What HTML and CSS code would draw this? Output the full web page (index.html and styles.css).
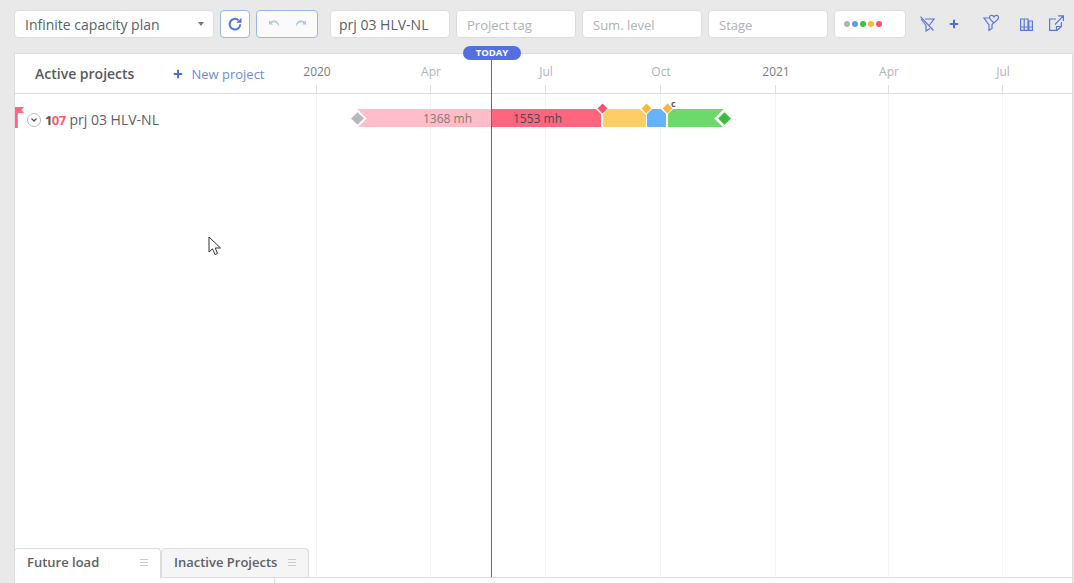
FILE: index.html
```html
<!DOCTYPE html>
<html lang="en">
<head>
<meta charset="utf-8">
<title>Infinite capacity plan</title>
<link rel="stylesheet" href="styles.css">
</head>
<body>
<header class="toolbar">
  <div class="field plan"><span>Infinite capacity plan</span><i class="caret"></i></div>
  <button class="tool refresh" aria-label="Refresh">
    <svg width="16" height="16" viewBox="0 0 16 16"><path d="M13.200 8.200A5.300 5.300 0 1 1 11.400 4.200" fill="none" stroke="#4f74e3" stroke-width="2"/><path d="M9.300 6.800h5.200V1.800z" fill="#4f74e3"/></svg>
  </button>
  <div class="tool history">
    <svg width="13" height="10" viewBox="0 0 14 10"><path d="M1 1v4.500h4.500L3.700 3.800C6.500 2.200 9.600 3 11.600 7.600 13 3 7 -1 2.700 2.600z" fill="#b4c4ee"/></svg>
    <svg width="13" height="10" viewBox="0 0 14 10"><path d="M13 1v4.500H8.500l1.800-1.700C7.500 2.200 4.400 3 2.400 7.600 1 3 7 -1 11.300 2.600z" fill="#b4c4ee"/></svg>
  </div>
  <div class="field value">prj 03 HLV-NL</div>
  <div class="field search">Project tag</div>
  <div class="field search">Sum. level</div>
  <div class="field search">Stage</div>
  <div class="field dots"><i class="dot grey"></i><i class="dot blue"></i><i class="dot green"></i><i class="dot amber"></i><i class="dot rose"></i></div>
  <div class="actions">
    <svg class="icon-filter" width="15" height="16" viewBox="0 0 15 16"><path d="M.5 .7L13.500 14.500M5 3H14L9.500 9M1 3L6 9.500V15L10 12.500" fill="none" stroke="#5a75e0" stroke-width="1.200"/></svg>
    <svg class="icon-plus" width="10" height="10" viewBox="0 0 10 10"><path d="M5 .8v8.400M.8 5h8.400" stroke="#4f6fe0" stroke-width="2"/></svg>
    <svg class="icon-fav" width="16" height="18" viewBox="0 0 16 18"><path d="M6.500 4H1L6 11V16.500L9 14.500V10.500L10.500 9M11 8.800C8 6.500 6.500 5 6.500 3.200 6.500 1 10 .7 11 3 12 .7 15.500 1 15.500 3.200 15.500 5 14 6.500 11 8.800Z" fill="none" stroke="#5a75e0" stroke-width="1.200"/></svg>
    <svg class="icon-books" width="13" height="13" viewBox="0 0 13 13"><path d="M.6 1h3.600v11.400H.6zM4.200 1h3.800v11.400H4.200zM8.800 3h3.600v9.400H8.800zM.6 9h11.800" fill="none" stroke="#5a75e0" stroke-width="1.200"/></svg>
    <svg class="icon-export" width="15" height="16" viewBox="0 0 15 16"><path d="M7 4H.6V15.400H8L12.400 11.500V7M7.500 15.400V11.500H12.400M6 9.500L14 1.200M9 .8H14.400V6" fill="none" stroke="#5a75e0" stroke-width="1.200"/></svg>
  </div>
</header>

<main class="panel">
  <div class="panel-head">
    <h1 class="panel-title">Active projects</h1>
    <a class="new-project"><svg width="10" height="10" viewBox="0 0 10 10"><path d="M5 .8v8.400M.8 5h8.400" stroke="#4f6fe0" stroke-width="2"/></svg><span>New project</span></a>
  </div>
  <div class="row">
    <svg class="flag" width="10" height="21" viewBox="0 0 10 21"><path d="M0 0h9L6.500 3 9 6H2.800V21H0z" fill="#fc6681"/></svg>
    <span class="toggle"><svg width="8" height="6" viewBox="0 0 8 6"><path d="M1.500 1.500L4 4 6.500 1.500" fill="none" stroke="#555" stroke-width="1.300"/></svg></span>
    <span class="row-id"><b class="id-dark">1</b><b class="id-red">07</b></span>
    <span class="row-name">prj 03 HLV-NL</span>
  </div>

  <div class="tabs">
    <div class="tab active"><span>Future load</span><i class="grip"></i></div>
    <div class="tab"><span>Inactive Projects</span><i class="grip"></i></div>
    <div class="tabs-rest"></div>
  </div>

  <div class="chart">
    <span class="tick t0"></span><span class="tick t1"></span><span class="tick t2"></span><span class="tick t3"></span><span class="tick t4"></span><span class="tick t5"></span><span class="tick t6"></span>
    <span class="grid t0"></span><span class="grid t1"></span><span class="grid t2"></span><span class="grid t3"></span><span class="grid t4"></span><span class="grid t5"></span><span class="grid t6"></span>
    <span class="label year l0">2020</span><span class="label l1">Apr</span><span class="label l2">Jul</span><span class="label l3">Oct</span><span class="label year l4">2021</span><span class="label l5">Apr</span><span class="label l6">Jul</span>

    <div class="seg seg-pink">1368 mh</div>
    <div class="seg seg-red">1553 mh</div>
    <div class="seg seg-yellow"></div>
    <div class="seg seg-sky"></div>
    <div class="seg seg-lime"></div>
    <i class="notch n-start"></i>
    <i class="notch n-end"></i>
    <i class="notch small n-a"></i>
    <i class="notch small n-b"></i>
    <i class="notch small n-c"></i>
    <i class="gem g-start"></i>
    <i class="gem tiny g-red"></i>
    <i class="gem tiny g-amber1"></i>
    <i class="gem tiny g-amber2"></i>
    <i class="gem g-end"></i>
    <span class="c-mark">c</span>

    <div class="today-line"></div>
    <div class="today">TODAY</div>
    <span class="stub"></span>
  </div>
  <svg class="cursor" width="14" height="21" viewBox="0 0 14 21"><path d="M1 1V16L4.500 12.800 7 18.500 9.500 17.400 7.200 12H12.500Z" fill="#fff" stroke="#333" stroke-width="1"/></svg>
</main>
</body>
</html>
```
FILE: styles.css
```css
* { box-sizing: border-box; }
html, body { height: 583px; overflow: hidden; }
body {
  margin: 0;
  padding: 10px 1px 0 14px;
  display: flex;
  flex-direction: column;
  background: #e9e9e9;
  font-family: "Open Sans", "Noto Sans", sans-serif;
  color: #5c6068;
}

.toolbar { display: flex; align-items: stretch; height: 28px; gap: 6px; }
.field {
  display: flex;
  align-items: center;
  flex: none;
  background: #fff;
  border: 1px solid #dcdcdc;
  border-radius: 4px;
  font-size: 14px;
}
.plan { width: 200px; padding: 0 10px; justify-content: space-between; color: #5a5f66; }
.caret { border: 3.500px solid transparent; border-top: 4px solid #777; border-bottom: 0; margin-right: -1px; }
.tool {
  display: flex; align-items: center; justify-content: center; flex: none;
  background: #fff; border: 1px solid #9db5ef; border-radius: 4px; padding: 0;
}
.refresh { width: 30px; }
.history { width: 62px; gap: 13px; background: #fafafa; }
.search { width: 120px; padding: 1px 10px 0; color: #aeb1b6; font-size: 13px; }
.value { width: 120px; padding: 0 8px; margin-left: 6px; color: #5a5f66; }
.dots { width: 72px; padding: 0 0 0 9px; gap: 2px; }
.dot { flex: none; width: 6px; height: 6px; border-radius: 50%; }
.grey { background: #b3b3b3; }
.blue { background: #5b9bf5; }
.green { background: #3fc13f; }
.amber { background: #fbb63b; }
.rose { background: #fb5070; }
.actions { flex: 1; display: flex; align-items: center; padding-left: 8px; }
.actions svg { flex: none; }
.icon-filter { margin-right: 14px; }
.icon-plus { margin-right: 24px; }
.icon-fav { margin-right: 21px; margin-top: -2px; }
.icon-books { margin-right: 16px; }
.icon-export { margin-top: -2px; }

.panel {
  position: relative;
  flex: 1;
  margin-top: 15px;
  background: #fff;
  border: 1px solid #dcdcdc;
  border-bottom: 0;
}
.panel-head {
  display: flex;
  align-items: center;
  height: 40px;
  padding: 0 0 0 20px;
  border-bottom: 1px solid #dedede;
}
.panel-title { margin: 0 39px 0 0; font-size: 14px; font-weight: 600; color: #555a62; }
.new-project { display: flex; align-items: center; gap: 8px; font-size: 13px; color: #7089d8; }
.row { display: flex; align-items: center; height: 51px; position: relative; padding-left: 12px; }
.flag { position: absolute; left: 0; top: 13px; }
.toggle {
  width: 14px; height: 14px; border: 1px solid #bbb; border-radius: 50%;
  display: flex; align-items: center; justify-content: center;
}
.row-id { margin-left: 4px; font-size: 13px; letter-spacing: -.6px; }
.id-dark { color: #555; }
.id-red { color: #fb5a72; }
.row-name { margin-left: 4px; font-size: 14px; color: #5c6068; }

.tabs { position: absolute; left: -1px; right: 0; bottom: 5px; display: flex; align-items: flex-end; z-index: 2; }
.tab {
  display: flex; align-items: center; justify-content: space-between;
  width: 148px; height: 30px; padding: 0 12px 2px;
  background: #f5f5f5; border: 1px solid #dcdcdc; border-radius: 4px 4px 0 0;
  font-size: 13px; font-weight: 600; color: #5c6068;
}
.tab.active { width: 147px; height: 31px; padding-bottom: 3px; background: #fff; border-bottom-color: #fff; margin-bottom: -1px; }
.grip { width: 8px; height: 7px; border-top: 1px solid #ccc; border-bottom: 1px solid #ccc; position: relative; }
.grip::after { content: ""; position: absolute; left: 0; right: 0; top: 2px; border-top: 1px solid #ccc; }
.tabs-rest { flex: 1; border-bottom: 1px solid #dcdcdc; }

.chart { position: absolute; inset: 0; pointer-events: none; }
.tick { position: absolute; top: 31px; height: 9px; width: 1px; background: #dedede; }
.grid { position: absolute; top: 40px; bottom: 6px; width: 1px; background: #f4f4f4; }
.t0 { left: 301px; }
.t1 { left: 415px; }
.t2 { left: 530px; }
.t3 { left: 645px; }
.t4 { left: 760px; }
.t5 { left: 873px; }
.t6 { left: 987px; }
.label { position: absolute; top: 10px; width: 60px; text-align: center; font-size: 12px; line-height: 16px; color: #b0b3b8; }
.label.year { color: #7a7d82; }
.l0 { left: 272px; }
.l1 { left: 386px; }
.l2 { left: 501px; }
.l3 { left: 616px; }
.l4 { left: 731px; }
.l5 { left: 844px; }
.l6 { left: 958px; }

.seg { position: absolute; top: 55px; height: 18px; font-size: 12px; line-height: 19px; text-align: right; }
.seg-pink { left: 342px; width: 134px; background: #ffbdc9; color: #8a7a70; padding-right: 19px; }
.seg-red { left: 476px; width: 110px; background: #fe667f; color: #4a4a55; padding-right: 39px; font-weight: 500; }
.seg-yellow { left: 588px; width: 43px; background: #ffcd65; }
.seg-sky { left: 632px; width: 19px; background: #66b3fb; }
.seg-lime { left: 653px; width: 56px; background: #6dd96b; }
.notch { position: absolute; width: 13px; height: 13px; transform: rotate(45deg); background: #fff; }
.notch.small { width: 10px; height: 10px; }
.n-start { left: 336px; top: 58px; }
.n-end { left: 702px; top: 58px; }
.n-a { left: 582px; top: 49px; }
.n-b { left: 626px; top: 49px; }
.n-c { left: 647px; top: 49px; }
.gem { position: absolute; width: 9px; height: 9px; transform: rotate(45deg); }
.gem.tiny { width: 7px; height: 7px; }
.g-start { left: 337.500px; top: 60px; background: #b8b8b8; }
.g-red { left: 583.500px; top: 50.500px; background: #fb5070; }
.g-amber1 { left: 627.500px; top: 50.500px; background: #fbb63b; }
.g-amber2 { left: 648.500px; top: 50.500px; background: #fbb63b; }
.g-end { left: 704.500px; top: 59.500px; background: #3dbb3d; }
.c-mark { position: absolute; left: 656px; top: 44px; font-size: 9px; line-height: 12px; font-weight: 700; color: #555a7a; }

.today-line { position: absolute; left: 476px; top: 6px; bottom: 6px; width: 1px; background: #4f66cf; z-index: 3; }
.today {
  position: absolute; left: 448px; top: -8px; width: 58px; height: 14px;
  background: #5470e0; border-radius: 7px; color: #fff;
  font-size: 9.500px; font-weight: 700; line-height: 14px; text-align: center; z-index: 3;
}
.stub { position: absolute; left: 259px; bottom: 0; height: 6px; width: 1px; background: #dcdcdc; z-index: 3; }
.cursor { position: absolute; left: 193px; top: 182px; z-index: 4; }
```
